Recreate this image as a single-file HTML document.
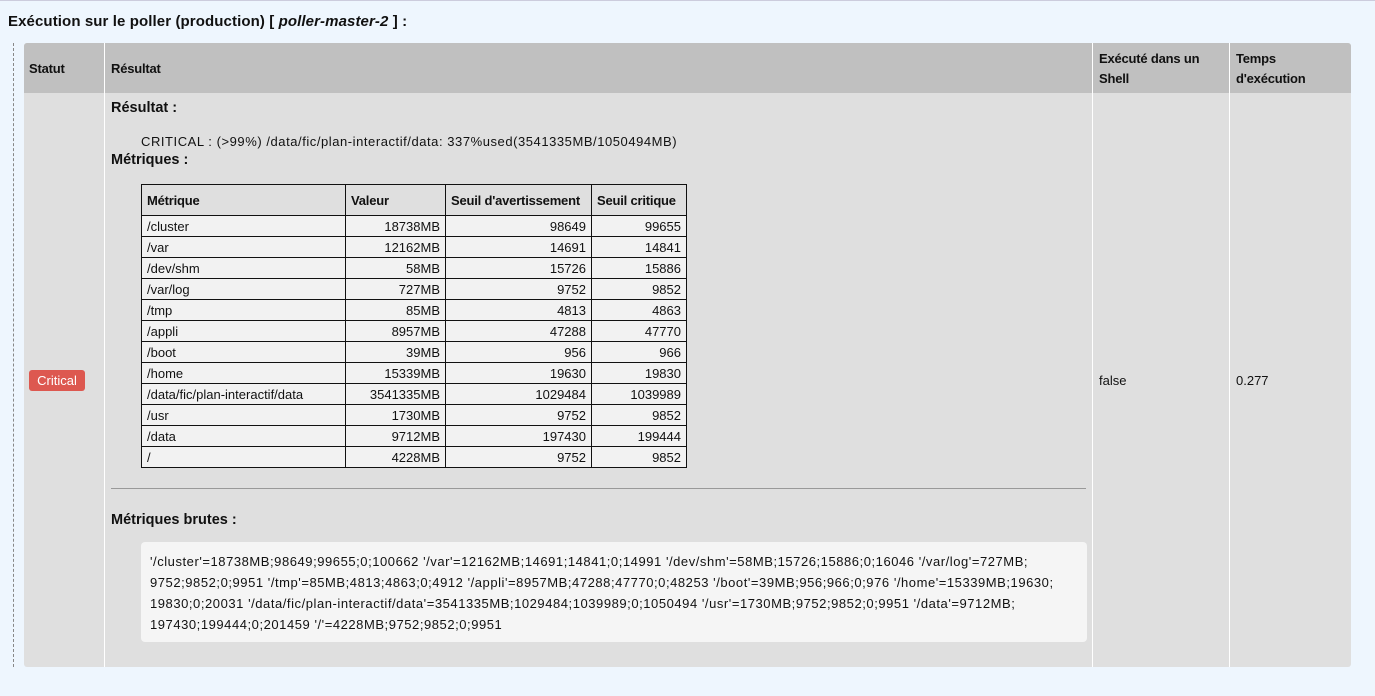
<!DOCTYPE html>
<html><head><meta charset="utf-8"><style>
*{margin:0;padding:0;box-sizing:border-box}
body{width:1375px;height:696px;background:#eef6fe;font-family:"Liberation Sans",sans-serif;font-size:13px;color:#111;position:relative;overflow:hidden;border-top:1px solid #ccd;}
.abs{position:absolute}
h1{position:absolute;left:8px;top:12px;font-size:15px;font-weight:bold;letter-spacing:0.1px}
.dash{position:absolute;left:13px;top:42px;height:624px;border-left:1px dashed #888}
.tbl{position:absolute;left:24px;top:42px;width:1327px;height:624px;background:#dfdfdf;border-radius:3px;overflow:hidden}
.hdr{position:absolute;left:0;top:0;width:100%;height:50px;background:#c0c0c0}
.vl{position:absolute;top:0;width:1px;height:624px;background:#fff}
.th{position:absolute;font-weight:bold;font-size:13px;letter-spacing:-0.2px;line-height:20px}
.badge{position:absolute;left:5px;top:327px;width:56px;height:21px;background:#dd5850;color:#fff;border-radius:3px;font-size:13px;text-align:center;line-height:21px}
table{position:absolute;left:141px;top:183px;border-collapse:collapse;font-size:13px}
td,th{border:1px solid #111;height:21px;padding:0 5px;background:#f2f2f2}
th{height:31px;text-align:left;background:#dfdfdf;font-weight:bold;letter-spacing:-0.2px}
td.r{text-align:right}
.raw{position:absolute;left:141px;top:541px;width:946px;height:100px;background:#f5f5f5;border-radius:4px;padding:9px 9px;line-height:21px;font-size:13px;letter-spacing:0.55px;white-space:nowrap}
.h2{position:absolute;font-weight:bold;font-size:14.5px;letter-spacing:0}
</style></head><body>
<h1>Exécution sur le poller (production) [ <i>poller-master-2</i> ] :</h1>
<div class="dash"></div>
<div class="tbl">
 <div class="hdr"></div>
 <div class="vl" style="left:80px"></div>
 <div class="vl" style="left:1068px"></div>
 <div class="vl" style="left:1205px"></div>
 <div class="th" style="left:5px;top:16px">Statut</div>
 <div class="th" style="left:87px;top:16px">Résultat</div>
 <div class="th" style="left:1075px;top:6px">Exécuté dans un<br>Shell</div>
 <div class="th" style="left:1212px;top:6px">Temps<br>d'exécution</div>
 <div class="badge">Critical</div>
 <div class="abs" style="left:1075px;top:330px">false</div>
 <div class="abs" style="left:1212px;top:330px">0.277</div>
 <div class="abs" style="left:87px;top:445px;width:975px;height:1px;background:#999"></div>
</div>
<div class="h2" style="left:111px;top:99px">Résultat :</div>
<div class="abs" style="left:141px;top:133px;letter-spacing:0.55px">CRITICAL : (&gt;99%) /data/fic/plan-interactif/data: 337%used(3541335MB/1050494MB)</div>
<div class="h2" style="left:111px;top:151px">Métriques :</div>
<table>
<tr><th style="width:204px">Métrique</th><th style="width:100px">Valeur</th><th style="width:146px">Seuil d'avertissement</th><th style="width:95px">Seuil critique</th></tr>
<tr><td>/cluster</td><td class="r">18738MB</td><td class="r">98649</td><td class="r">99655</td></tr>
<tr><td>/var</td><td class="r">12162MB</td><td class="r">14691</td><td class="r">14841</td></tr>
<tr><td>/dev/shm</td><td class="r">58MB</td><td class="r">15726</td><td class="r">15886</td></tr>
<tr><td>/var/log</td><td class="r">727MB</td><td class="r">9752</td><td class="r">9852</td></tr>
<tr><td>/tmp</td><td class="r">85MB</td><td class="r">4813</td><td class="r">4863</td></tr>
<tr><td>/appli</td><td class="r">8957MB</td><td class="r">47288</td><td class="r">47770</td></tr>
<tr><td>/boot</td><td class="r">39MB</td><td class="r">956</td><td class="r">966</td></tr>
<tr><td>/home</td><td class="r">15339MB</td><td class="r">19630</td><td class="r">19830</td></tr>
<tr><td>/data/fic/plan-interactif/data</td><td class="r">3541335MB</td><td class="r">1029484</td><td class="r">1039989</td></tr>
<tr><td>/usr</td><td class="r">1730MB</td><td class="r">9752</td><td class="r">9852</td></tr>
<tr><td>/data</td><td class="r">9712MB</td><td class="r">197430</td><td class="r">199444</td></tr>
<tr><td>/</td><td class="r">4228MB</td><td class="r">9752</td><td class="r">9852</td></tr>
</table>
<div class="h2" style="left:111px;top:511px">Métriques brutes :</div>
<div class="raw">'/cluster'=18738MB;98649;99655;0;100662 '/var'=12162MB;14691;14841;0;14991 '/dev/shm'=58MB;15726;15886;0;16046 '/var/log'=727MB;<br>9752;9852;0;9951 '/tmp'=85MB;4813;4863;0;4912 '/appli'=8957MB;47288;47770;0;48253 '/boot'=39MB;956;966;0;976 '/home'=15339MB;19630;<br>19830;0;20031 '/data/fic/plan-interactif/data'=3541335MB;1029484;1039989;0;1050494 '/usr'=1730MB;9752;9852;0;9951 '/data'=9712MB;<br>197430;199444;0;201459 '/'=4228MB;9752;9852;0;9951</div>
</body></html>
